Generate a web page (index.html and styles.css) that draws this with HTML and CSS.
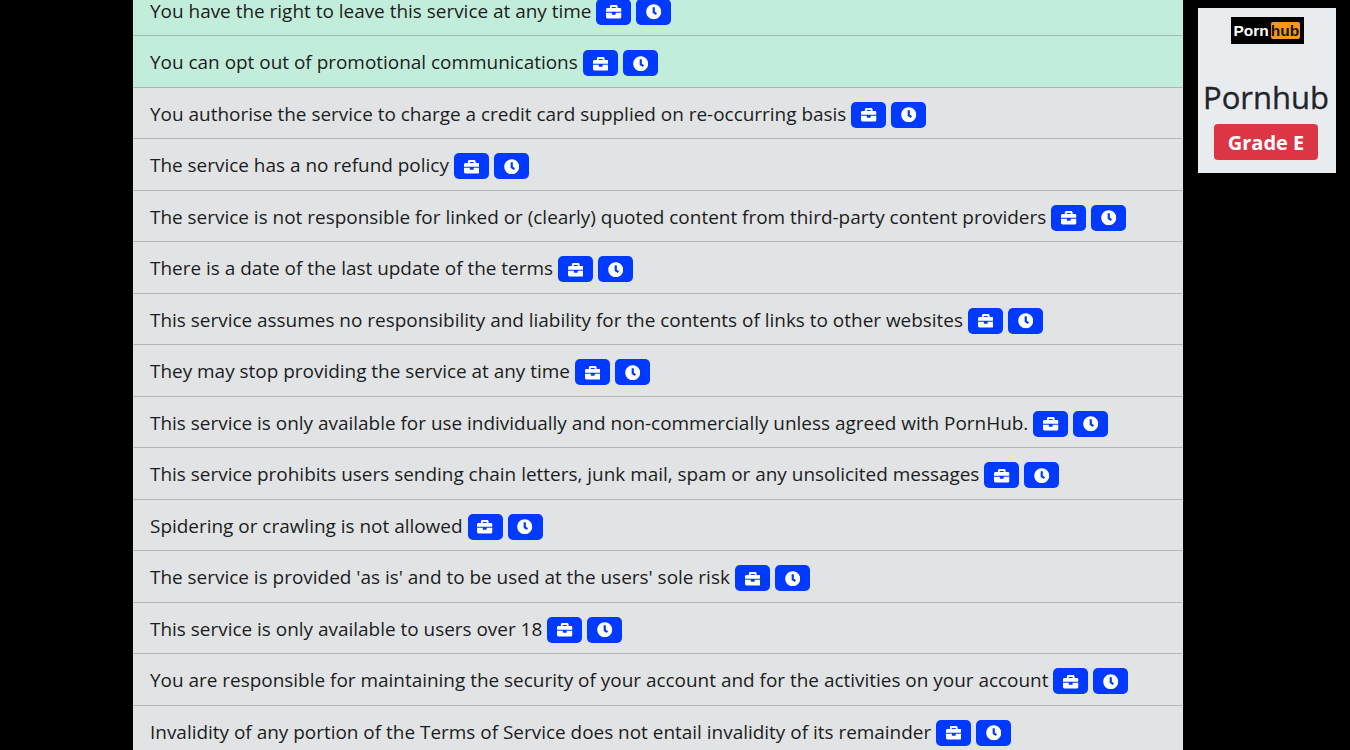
FILE: index.html
```html
<!DOCTYPE html>
<html lang="en">
<head>
<meta charset="utf-8">
<title>Pornhub</title>
<link rel="stylesheet" href="styles.css">
</head>
<body>
<svg class="defs" width="0" height="0" aria-hidden="true">
  <symbol id="case" viewBox="0 0 512 512"><path d="M320 336c0 8.800-7.200 16-16 16h-96c-8.800 0-16-7.200-16-16v-48H0v144c0 25.600 22.400 48 48 48h416c25.600 0 48-22.400 48-48V288H320v48zm144-208h-80V80c0-25.600-22.400-48-48-48H176c-25.600 0-48 22.400-48 48v48H48c-25.600 0-48 22.400-48 48v80h512v-80c0-25.600-22.400-48-48-48zm-144 0H192V96h128v32z"/></symbol>
  <symbol id="clock" viewBox="0 0 512 512"><path d="M256 8C119 8 8 119 8 256s111 248 248 248 248-111 248-248S393 8 256 8zm57.100 350.100L224.900 294c-3.100-2.300-4.900-5.900-4.900-9.700V116c0-6.600 5.400-12 12-12h48c6.600 0 12 5.400 12 12v137.700l63.500 46.200c5.400 3.900 6.500 11.400 2.600 16.800l-28.200 38.800c-3.900 5.300-11.400 6.500-16.800 2.600z"/></symbol>
</svg>
<div class="page">
  <ul class="points">
    <li class="point good">You have the right to leave this service at any time <span class="btn"><svg class="ico"><use href="#case"/></svg></span> <span class="btn"><svg class="ico"><use href="#clock"/></svg></span></li>
    <li class="point good">You can opt out of promotional communications <span class="btn"><svg class="ico"><use href="#case"/></svg></span> <span class="btn"><svg class="ico"><use href="#clock"/></svg></span></li>
    <li class="point">You authorise the service to charge a credit card supplied on re-occurring basis <span class="btn"><svg class="ico"><use href="#case"/></svg></span> <span class="btn"><svg class="ico"><use href="#clock"/></svg></span></li>
    <li class="point">The service has a no refund policy <span class="btn"><svg class="ico"><use href="#case"/></svg></span> <span class="btn"><svg class="ico"><use href="#clock"/></svg></span></li>
    <li class="point">The service is not responsible for linked or (clearly) quoted content from third-party content providers <span class="btn"><svg class="ico"><use href="#case"/></svg></span> <span class="btn"><svg class="ico"><use href="#clock"/></svg></span></li>
    <li class="point">There is a date of the last update of the terms <span class="btn"><svg class="ico"><use href="#case"/></svg></span> <span class="btn"><svg class="ico"><use href="#clock"/></svg></span></li>
    <li class="point">This service assumes no responsibility and liability for the contents of links to other websites <span class="btn"><svg class="ico"><use href="#case"/></svg></span> <span class="btn"><svg class="ico"><use href="#clock"/></svg></span></li>
    <li class="point">They may stop providing the service at any time <span class="btn"><svg class="ico"><use href="#case"/></svg></span> <span class="btn"><svg class="ico"><use href="#clock"/></svg></span></li>
    <li class="point">This service is only available for use individually and non-commercially unless agreed with PornHub. <span class="btn"><svg class="ico"><use href="#case"/></svg></span> <span class="btn"><svg class="ico"><use href="#clock"/></svg></span></li>
    <li class="point">This service prohibits users sending chain letters, junk mail, spam or any unsolicited messages <span class="btn"><svg class="ico"><use href="#case"/></svg></span> <span class="btn"><svg class="ico"><use href="#clock"/></svg></span></li>
    <li class="point">Spidering or crawling is not allowed <span class="btn"><svg class="ico"><use href="#case"/></svg></span> <span class="btn"><svg class="ico"><use href="#clock"/></svg></span></li>
    <li class="point">The service is provided 'as is' and to be used at the users' sole risk <span class="btn"><svg class="ico"><use href="#case"/></svg></span> <span class="btn"><svg class="ico"><use href="#clock"/></svg></span></li>
    <li class="point">This service is only available to users over 18 <span class="btn"><svg class="ico"><use href="#case"/></svg></span> <span class="btn"><svg class="ico"><use href="#clock"/></svg></span></li>
    <li class="point">You are responsible for maintaining the security of your account and for the activities on your account <span class="btn"><svg class="ico"><use href="#case"/></svg></span> <span class="btn"><svg class="ico"><use href="#clock"/></svg></span></li>
    <li class="point">Invalidity of any portion of the Terms of Service does not entail invalidity of its remainder <span class="btn"><svg class="ico"><use href="#case"/></svg></span> <span class="btn"><svg class="ico"><use href="#clock"/></svg></span></li>
  </ul>
  <aside class="card">
    <div class="logo"><span class="logo-porn">Porn</span><span class="logo-hub">hub</span></div>
    <h1 class="name">Pornhub</h1>
    <div class="grade">Grade E</div>
  </aside>
</div>
</body>
</html>
```
FILE: styles.css
```css
html, body {
  margin: 0;
  height: 100%;
  background: #000;
  overflow: hidden;
}
body {
  font-family: "Open Sans", "Noto Sans", sans-serif;
  color: #1a1d21;
}
.defs {
  position: absolute;
}
.page {
  display: flex;
  align-items: flex-start;
  height: 750px;
  padding-left: 133px;
}
.points {
  list-style: none;
  margin: -15.5px 0 0;
  padding: 0;
  width: 1050px;
  flex: none;
}
.point {
  box-sizing: border-box;
  height: 51.5px;
  padding: 2px 17px 0;
  display: flex;
  align-items: center;
  gap: 5px;
  background: #e2e3e5;
  border-bottom: 1px solid #b4b5b7;
  font-size: 18.95px;
  line-height: 30px;
  white-space: nowrap;
}
.point.good {
  background: #c3eddb;
  border-bottom-color: #9ebdb0;
}
.btn {
  display: inline-flex;
  align-items: center;
  justify-content: center;
  width: 35px;
  height: 26px;
  background: #0039ff;
  border-radius: 5px;
  margin-top: 2px;
  flex: none;
}
.ico {
  width: 15.5px;
  height: 15.5px;
  fill: #fff;
}
.card {
  box-sizing: border-box;
  width: 138px;
  height: 165px;
  margin: 8px 0 0 15px;
  background: #e9ecef;
  display: flex;
  flex-direction: column;
  align-items: center;
  padding-top: 9px;
}
.logo {
  display: flex;
  align-items: center;
  width: 73px;
  height: 27px;
  box-sizing: border-box;
  padding: 0 3px;
  background: #000;
  font-family: "Liberation Sans", sans-serif;
  font-weight: 700;
  font-size: 15.5px;
  line-height: 17px;
}
.logo-porn {
  color: #fff;
  width: 37px;
}
.logo-hub {
  color: #1a1206;
  background: #f7971d;
  border-radius: 2px;
  width: 29px;
  text-align: center;
}
.name {
  margin: 34px 2px 0 0;
  font-size: 31px;
  font-weight: 400;
  -webkit-text-stroke: 0.35px #212529;
  color: #212529;
  line-height: 38px;
  white-space: nowrap;
}
.grade {
  box-sizing: border-box;
  width: 104px;
  height: 36px;
  margin: 8px 2px 0 0;
  background: #dc3545;
  color: #fff;
  border-radius: 4px;
  font-size: 20px;
  font-weight: 700;
  display: flex;
  align-items: center;
  justify-content: center;
}
```
